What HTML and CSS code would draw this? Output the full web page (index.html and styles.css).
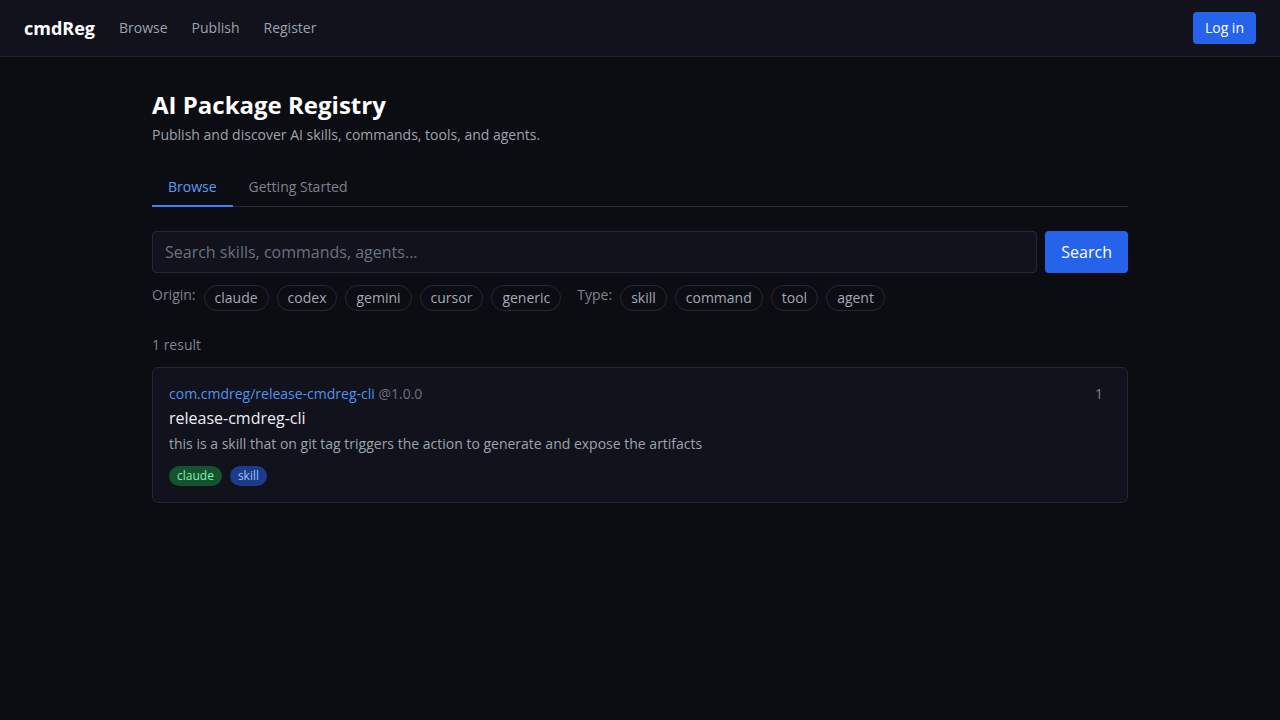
FILE: index.html
```html
<!DOCTYPE html>
<html>
<head>
    <title>cmdReg - AI Package Registry</title>
    <link rel="stylesheet" href="styles.css">
</head>
<body>
    <header class="topbar">
        <div class="topbar-left">
            <a class="logo" href="#">cmdReg</a>
            <nav class="nav">
                <a href="#">Browse</a>
                <a href="#">Publish</a>
                <a href="#">Register</a>
            </nav>
        </div>
        <button class="btn btn-login">Log in</button>
    </header>

    <main class="container">
        <h1 class="title">AI Package Registry</h1>
        <p class="subtitle">Publish and discover AI skills, commands, tools, and agents.</p>

        <div class="tabs">
            <a class="tab active" href="#">Browse</a>
            <a class="tab" href="#">Getting Started</a>
        </div>

        <form class="search-row">
            <input class="search-input" type="text" placeholder="Search skills, commands, agents...">
            <button class="btn btn-search" type="button">Search</button>
        </form>

        <div class="filters">
            <div class="filter-group">
                <span class="filter-label">Origin:</span>
                <span class="chip">claude</span>
                <span class="chip">codex</span>
                <span class="chip">gemini</span>
                <span class="chip">cursor</span>
                <span class="chip">generic</span>
            </div>
            <div class="filter-group">
                <span class="filter-label">Type:</span>
                <span class="chip">skill</span>
                <span class="chip">command</span>
                <span class="chip">tool</span>
                <span class="chip">agent</span>
            </div>
        </div>

        <p class="result-count">1 result</p>

        <div class="results">
            <div class="card">
                <div class="card-head">
                    <div>
                        <a class="pkg-id" href="#">com.cmdreg/release-cmdreg-cli</a>
                        <span class="pkg-version">@1.0.0</span>
                    </div>
                    <span class="pkg-count">1</span>
                </div>
                <div class="pkg-name">release-cmdreg-cli</div>
                <p class="pkg-desc">this is a skill that on git tag triggers the action to generate and expose the artifacts</p>
                <div class="tags">
                    <span class="tag tag-origin">claude</span>
                    <span class="tag tag-type">skill</span>
                </div>
            </div>
        </div>
    </main>
</body>
</html>
```

FILE: styles.css
```css
* {
    box-sizing: border-box;
}

body {
    margin: 0;
    background: #0c0d12;
    color: #e5e7eb;
    font-family: "Open Sans", "Noto Sans", sans-serif;
    font-size: 14px;
    line-height: 20px;
}

a {
    text-decoration: none;
    color: inherit;
}

.topbar {
    display: flex;
    justify-content: space-between;
    align-items: center;
    height: 57px;
    padding: 0 24px;
    background: #11121b;
    border-bottom: 1px solid #1f2030;
}

.topbar-left {
    display: flex;
    align-items: center;
    gap: 24px;
}

.logo {
    font-size: 18px;
    font-weight: 700;
    color: #fff;
}

.nav {
    display: flex;
    gap: 24px;
}

.nav a {
    color: #9ca3af;
}

.btn {
    border: none;
    border-radius: 4px;
    background: #2563eb;
    color: #fff;
    font-family: inherit;
    cursor: pointer;
}

.btn-login {
    height: 32px;
    padding: 0 12px 1px;
    font-size: 14px;
}

.container {
    width: 976px;
    margin: 0 auto;
    padding-top: 32px;
}

.title {
    margin: 0 0 4px;
    font-size: 24px;
    line-height: 32px;
    font-weight: 700;
    color: #fff;
}

.subtitle {
    margin: 0;
    color: #9ca3af;
}

.tabs {
    display: flex;
    margin-top: 24px;
    border-bottom: 1px solid #2a2c3d;
}

.tab {
    padding: 8px 16px;
    color: #7d8290;
    border-bottom: 2px solid transparent;
    margin-bottom: -1px;
}

.tab.active {
    color: #5b9cf5;
    border-bottom-color: #3b82f6;
}

.search-row {
    display: flex;
    gap: 8px;
    margin: 24px 0 0;
}

.search-input {
    flex: 1;
    height: 42px;
    padding: 0 12px;
    background: #11121b;
    border: 1px solid #23253a;
    border-radius: 4px;
    color: #e5e7eb;
    font-family: inherit;
    font-size: 16px;
    outline: none;
}

.search-input::placeholder {
    color: #6b7080;
}

.btn-search {
    height: 42px;
    padding: 0 16px;
    font-size: 16px;
}

.filters {
    display: flex;
    gap: 16px;
    margin-top: 12px;
}

.filter-group {
    display: flex;
    align-items: flex-start;
    gap: 8px;
}

.filter-label {
    color: #7d8290;
}

.chip {
    padding: 2px 10px;
    border: 1px solid #23253a;
    border-radius: 999px;
    color: #a3a8b4;
}

.result-count {
    margin: 24px 0 12px;
    color: #7d8290;
}

.card {
    padding: 16px;
    background: #11121b;
    border: 1px solid #23253a;
    border-radius: 6px;
}

.card-head {
    display: flex;
    justify-content: space-between;
}

.pkg-id {
    color: #4f93ef;
}

.pkg-version {
    color: #6b7080;
}

.pkg-count {
    margin-right: 8px;
    color: #7d8290;
}

.pkg-name {
    margin-top: 2px;
    font-size: 16px;
    line-height: 24px;
    color: #eceef2;
}

.pkg-desc {
    margin: 4px 0 0;
    color: #9ca3af;
}

.tags {
    display: flex;
    gap: 8px;
    margin-top: 12px;
}

.tag {
    padding: 0 8px;
    border-radius: 10px;
    font-size: 12px;
    line-height: 20px;
}

.tag-origin {
    background: #14532d;
    color: #86efac;
}

.tag-type {
    background: #1e3a8a;
    color: #93c5fd;
}
```
